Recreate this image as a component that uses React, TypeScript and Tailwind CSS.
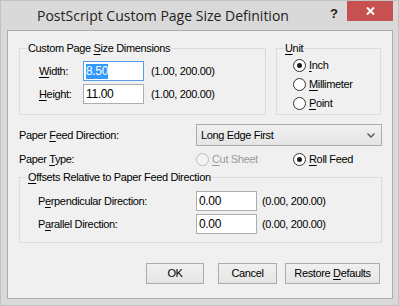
import React from "react";

function Key({ children }: { children: React.ReactNode }) {
  return <span className="underline underline-offset-[2px]">{children}</span>;
}

function Radio({ checked, disabled }: { checked?: boolean; disabled?: boolean }) {
  return (
    <span
      className={
        "w-[13px] h-[13px] rounded-full border flex items-center justify-center shrink-0 " +
        (disabled ? "border-[#bcbcbc] bg-[#f4f4f4]" : "border-[#333333] bg-white")
      }
    >
      {checked && <span className="w-[5px] h-[5px] rounded-full bg-[#1a1a1a]" />}
    </span>
  );
}

function Box({ children, focused, w }: { children: React.ReactNode; focused?: boolean; w: string }) {
  return (
    <div
      className={
        "h-[20px] bg-white border flex items-center px-[2px] text-[12px] " +
        w +
        (focused ? " border-[#569de5]" : " border-[#abadb3]")
      }
    >
      {children}
    </div>
  );
}

function Group({ label, className, children }: { label: React.ReactNode; className: string; children: React.ReactNode }) {
  return (
    <fieldset className={"border border-[#dcdcdc] " + className}>
      <legend className="ml-[7px] px-[1px] leading-[13px]">{label}</legend>
      {children}
    </fieldset>
  );
}

function Button({ children, w }: { children: React.ReactNode; w: string }) {
  return (
    <button className={"h-[21px] border border-[#acacac] bg-gradient-to-b from-[#f0f0f0] to-[#e5e5e5] " + w}>
      {children}
    </button>
  );
}

export default function App() {
  return (
    <div className="w-[399px] h-[306px] bg-[#d9d9d9] border border-[#c2c2c2] flex flex-col text-black font-['Liberation_Sans',Arial,sans-serif] text-[11px] tracking-[-0.35px]">
      {/* title bar */}
      <div className="h-[29px] flex items-start tracking-normal">
        <div className="flex-1 pl-[36px] pt-[5px] text-[14px] leading-[20px] text-[#222] font-['Open_Sans',sans-serif]">
          PostScript Custom Page Size Definition
        </div>
        <div className="pt-[5px] w-[17px] font-bold text-[13px] leading-[16px] text-[#222]">?</div>
        <div className="mr-[5px] w-[46px] h-[20px] bg-[#c75050] flex items-center justify-center">
          <svg width="9" height="8" viewBox="0 0 9 8">
            <path d="M1 0.5 L8 7.5 M8 0.5 L1 7.5" stroke="white" strokeWidth="2" />
          </svg>
        </div>
      </div>

      {/* client area */}
      <div className="ml-[6px] w-[386px] h-[269px] border border-[#adadad] bg-[#f0f0f0] flex flex-col pl-[11px]">
        <div className="flex mt-[11px]">
          <Group label={<>Custom Page <Key>S</Key>ize Dimensions</>} className="w-[247px] h-[73px]">
            <div className="pl-[19px] pt-[6px] flex flex-col gap-[3px]">
              <div className="flex items-center">
                <span className="w-[44px]"><Key>W</Key>idth:</span>
                <Box focused w="w-[61px]">
                  <span className="bg-[#3399ff] text-white leading-[15px]">8.50</span>
                </Box>
                <span className="ml-[7px]">(1.00, 200.00)</span>
              </div>
              <div className="flex items-center">
                <span className="w-[44px]"><Key>H</Key>eight:</span>
                <Box w="w-[61px]">11.00</Box>
                <span className="ml-[7px]">(1.00, 200.00)</span>
              </div>
            </div>
          </Group>
          <Group label={<><Key>U</Key>nit</>} className="ml-[10px] w-[105px] h-[73px]">
            <div className="pl-[16px] pt-[2px] flex flex-col gap-[3px] leading-[16px]">
              <div className="flex items-center gap-[3px]">
                <Radio checked />
                <span><Key>I</Key>nch</span>
              </div>
              <div className="flex items-center gap-[3px]">
                <Radio />
                <span><Key>M</Key>illimeter</span>
              </div>
              <div className="flex items-center gap-[3px]">
                <Radio />
                <span><Key>P</Key>oint</span>
              </div>
            </div>
          </Group>
        </div>

        <div className="flex items-center mt-[9px]">
          <span className="w-[177px]">Paper <Key>F</Key>eed Direction:</span>
          <div className="w-[186px] h-[22px] border border-[#acacac] bg-gradient-to-b from-[#f0f0f0] to-[#e5e5e5] flex items-center pl-[4px] pr-[6px]">
            <span className="flex-1">Long Edge First</span>
            <svg width="8" height="5" viewBox="0 0 8 5">
              <path d="M0.5 0.5 L4 4 L7.5 0.5" stroke="#555" strokeWidth="1.4" fill="none" />
            </svg>
          </div>
        </div>

        <div className="flex items-center mt-[5px] h-[16px]">
          <span className="w-[177px]">Paper <Key>T</Key>ype:</span>
          <div className="flex items-center gap-[3px] w-[97px] text-[#9a9a9a]">
            <Radio disabled />
            <span><Key>C</Key>ut Sheet</span>
          </div>
          <div className="flex items-center gap-[3px]">
            <Radio checked />
            <span><Key>R</Key>oll Feed</span>
          </div>
        </div>

        <Group label={<><Key>O</Key>ffsets Relative to Paper Feed Direction</>} className="mt-[4px] w-[363px] h-[72px]">
          <div className="pl-[18px] pt-[7px] flex flex-col gap-[3px]">
            <div className="flex items-center">
              <span className="w-[158px]">P<Key>e</Key>rpendicular Direction:</span>
              <Box w="w-[61px]">0.00</Box>
              <span className="ml-[5px]">(0.00, 200.00)</span>
            </div>
            <div className="flex items-center">
              <span className="w-[158px]">P<Key>a</Key>rallel Direction:</span>
              <Box w="w-[61px]">0.00</Box>
              <span className="ml-[5px]">(0.00, 200.00)</span>
            </div>
          </div>
        </Group>

        <div className="flex mt-[20px] pl-[127px]">
          <Button w="w-[58px]">OK</Button>
          <Button w="w-[59px] ml-[14px]">Cancel</Button>
          <Button w="w-[95px] ml-[8px]">Restore <Key>D</Key>efaults</Button>
        </div>
      </div>
    </div>
  );
}
